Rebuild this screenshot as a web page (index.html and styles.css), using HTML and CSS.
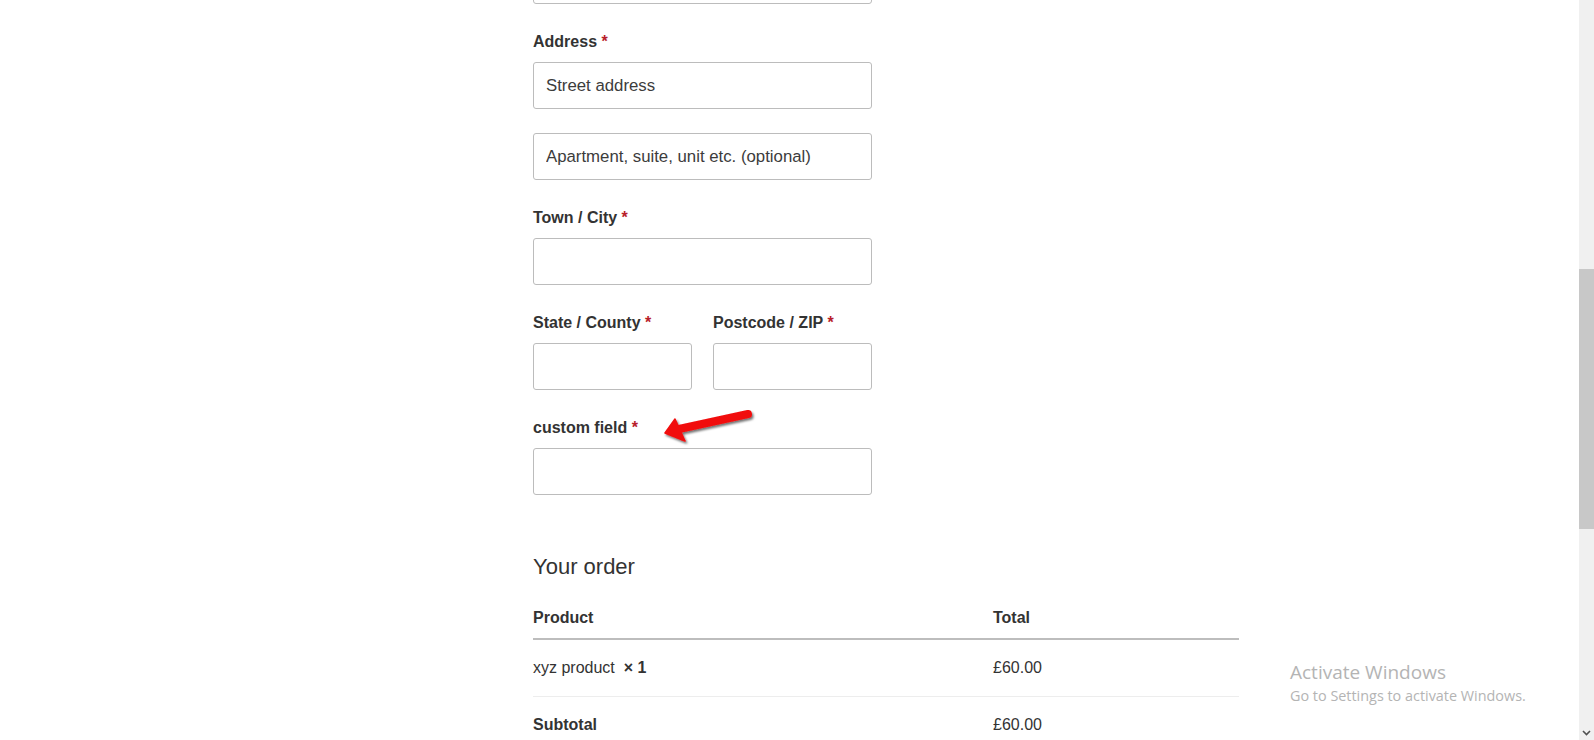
FILE: index.html
```html
<!DOCTYPE html>
<html lang="en">
<head>
<meta charset="utf-8">
<title>Checkout</title>
<link rel="stylesheet" href="styles.css">
</head>
<body>
<div class="page">
  <main class="content">
    <form class="checkout">
      <div class="field field-cut"><input class="input" type="text"></div>

      <div class="field">
        <label class="label">Address <span class="req">*</span></label>
        <input class="input" type="text" placeholder="Street address">
      </div>
      <div class="field">
        <input class="input" type="text" placeholder="Apartment, suite, unit etc. (optional)">
      </div>

      <div class="field">
        <label class="label">Town / City <span class="req">*</span></label>
        <input class="input" type="text">
      </div>

      <div class="field-row">
        <div class="field half">
          <label class="label">State / County <span class="req">*</span></label>
          <input class="input" type="text">
        </div>
        <div class="field half">
          <label class="label">Postcode / ZIP <span class="req">*</span></label>
          <input class="input" type="text">
        </div>
      </div>

      <div class="field">
        <label class="label label-arrow">custom field <span class="req">*</span>
          <svg class="arrow" width="100" height="44" viewBox="0 0 100 44" aria-hidden="true">
            <defs>
              <filter id="sh" x="-20%" y="-40%" width="140%" height="180%">
                <feDropShadow dx="1.5" dy="2" stdDeviation="1.2" flood-color="#000" flood-opacity="0.55"/>
              </filter>
            </defs>
            <g filter="url(#sh)">
              <line x1="18" y1="24" x2="87" y2="9" stroke="#f10b0b" stroke-width="8" stroke-linecap="round"/>
              <polygon points="4,28 14,14 24,36" fill="#f10b0b" stroke="#f10b0b" stroke-width="1.5" stroke-linejoin="round"/>
            </g>
          </svg>
        </label>
        <input class="input" type="text">
      </div>

      <h3 class="order-title">Your order</h3>
      <table class="order">
        <thead>
          <tr><th class="col-product">Product</th><th>Total</th></tr>
        </thead>
        <tbody>
          <tr><td class="col-product">xyz product&nbsp; <strong>×&nbsp;1</strong></td><td>£60.00</td></tr>
          <tr class="sub"><th class="col-product">Subtotal</th><td>£60.00</td></tr>
        </tbody>
      </table>
    </form>
  </main>
  <div class="scrollbar">
    <div class="thumb"></div>
    <div class="sb-arrow">
      <svg width="9" height="6" viewBox="0 0 9 6"><path d="M1 1 L4.5 4.5 L8 1" fill="none" stroke="#505050" stroke-width="1.6"/></svg>
    </div>
  </div>
</div>
<div class="activate">
  <div class="act-title">Activate Windows</div>
  <div class="act-sub">Go to Settings to activate Windows.</div>
</div>
</body>
</html>
```

FILE: styles.css
```css
* { box-sizing: border-box; }
html, body {
  margin: 0;
  padding: 0;
  height: 740px;
  overflow: hidden;
  background: #fff;
}
body {
  font-family: "Liberation Sans", Arial, sans-serif;
  color: #43454b;
  font-size: 16px;
}
.page {
  display: flex;
  height: 740px;
}
.content {
  flex: 1;
  min-width: 0;
}
.checkout {
  width: 706px;
  margin-left: 533px;
  margin-top: -43px;
}
.field {
  display: flex;
  flex-direction: column;
  margin-bottom: 24px;
}
.label {
  display: block;
  font-weight: bold;
  color: #333;
  font-size: 16px;
  line-height: 24px;
  padding-top: 2px;
  margin-bottom: 8px;
}
.req {
  color: #b8202a;
}
.label-arrow {
  position: relative;
}
.arrow {
  position: absolute;
  left: 128px;
  top: -9px;
}
.input {
  width: 339px;
  height: 47px;
  border: 1px solid #bcbcbc;
  border-radius: 3px;
  padding: 0 12px;
  font-family: "Liberation Sans", Arial, sans-serif;
  font-size: 16.8px;
  color: #43454b;
  background: #fff;
  outline: none;
}
.input::placeholder {
  color: #3c3c3c;
  opacity: 1;
}
.field-row {
  display: flex;
  gap: 21px;
  width: 339px;
}
.half {
  flex: 1;
}
.half .input {
  width: 100%;
}
.order-title {
  font-size: 22px;
  font-weight: normal;
  color: #333;
  line-height: 30px;
  margin: 57px 0 16px;
}
.order {
  width: 706px;
  border-collapse: collapse;
  font-size: 16px;
  color: #333;
}
.order th, .order td {
  text-align: left;
  line-height: 24px;
  padding: 16px 0;
  vertical-align: middle;
}
.order thead th {
  font-weight: bold;
  padding: 8px 0 8px;
  border-bottom: 2px solid #bdbdbd;
}
.order tbody tr:first-child td {
  border-bottom: 1px solid #ededed;
}
.col-product {
  width: 460px;
}
.order td strong {
  font-weight: bold;
}
.order .sub th {
  font-weight: bold;
}
.scrollbar {
  width: 15px;
  flex: none;
  height: 740px;
  background: #f0f0f0;
  display: flex;
  flex-direction: column;
}
.thumb {
  margin-top: 269px;
  height: 260px;
  background: #c8c8c8;
}
.sb-arrow {
  margin-top: auto;
  height: 14px;
  display: flex;
  justify-content: center;
  align-items: center;
}
.activate {
  position: absolute;
  left: 1290px;
  top: 663px;
  font-family: "Open Sans", "Noto Sans", sans-serif;
  color: #b4b4b4;
  line-height: 1;
}
.act-title {
  font-size: 19px;
  margin-bottom: 7px;
  font-weight: 400;
}
.act-sub {
  font-size: 14.4px;
}
```
